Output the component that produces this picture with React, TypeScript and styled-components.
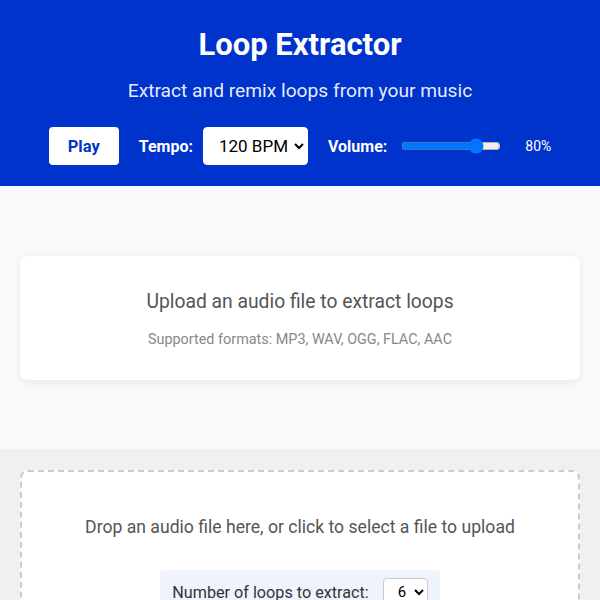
import React, { useState } from 'react';
import styled, { createGlobalStyle } from 'styled-components';

const GlobalStyle = createGlobalStyle`
  * { box-sizing: border-box; }
  body {
    margin: 0;
    font-family: Roboto, "Liberation Sans", Arial, sans-serif;
    background: #f0f0f0;
    color: #333;
  }
`;

const Header = styled.header`
  background-color: #0033cc;
  color: #fff;
  text-align: center;
  padding: 27px 20px 21px;
`;

const Title = styled.h1`
  font-size: 31px;
  line-height: 36px;
  font-weight: 700;
  margin: 0 0 16px;
`;

const Subtitle = styled.p`
  font-size: 19.2px;
  line-height: 23px;
  font-weight: 400;
  margin: 0 0 25px;
  color: rgba(255, 255, 255, 0.92);
`;

const Controls = styled.div`
  display: flex;
  justify-content: center;
  align-items: center;
  gap: 20px;
`;

const Group = styled.div`
  display: flex;
  align-items: center;
  gap: 10px;
`;

const PlayButton = styled.button`
  height: 38px;
  padding: 0 19px;
  border: none;
  border-radius: 4px;
  background: #fff;
  color: #0033cc;
  font-family: inherit;
  font-size: 16.5px;
  font-weight: 700;
  cursor: pointer;
`;

const Label = styled.label`
  font-size: 16px;
  font-weight: 700;
  color: #fff;
`;

const Select = styled.select<{ $small?: boolean }>`
  height: ${(p) => (p.$small ? '28px' : '38px')};
  padding: ${(p) => (p.$small ? '0 4px 0 10px' : '0 2px 0 11px')};
  border: 1px solid ${(p) => (p.$small ? '#ccc' : '#fff')};
  border-radius: 4px;
  background: #fff;
  color: #000;
  font-family: inherit;
  font-size: ${(p) => (p.$small ? '15px' : '17px')};
`;

const Range = styled.input`
  width: 100px;
  margin: 0 4px;
  accent-color: #0075ff;
`;

const Value = styled.span`
  font-size: 14px;
  color: #fff;
  margin-left: 10px;
`;

const Intro = styled.section`
  background: #f8f9fa;
  padding: 70px 20px 69px;
`;

const Card = styled.div`
  background: #fff;
  border-radius: 8px;
  box-shadow: 0 2px 8px rgba(0, 0, 0, 0.07);
  padding: 34px 20px 31px;
  text-align: center;
`;

const CardTitle = styled.h2`
  font-size: 19.3px;
  line-height: 23px;
  font-weight: 400;
  color: #555;
  margin: 0 0 18px;
`;

const CardNote = styled.p`
  font-size: 14.4px;
  line-height: 18px;
  color: #888;
  margin: 0;
`;

const UploadSection = styled.section`
  background: #f0f0f0;
  padding: 21px 20px 40px;
`;

const DropZone = styled.div`
  background: #fff;
  border: 2px dashed #ccc;
  border-radius: 8px;
  padding: 43px 20px 40px;
  text-align: center;
  cursor: pointer;
`;

const DropText = styled.p`
  font-size: 17.6px;
  line-height: 24px;
  color: #555;
  margin: 0 0 31px;
`;

const LoopBox = styled.div`
  display: inline-flex;
  align-items: center;
  gap: 14px;
  background: #eff3fb;
  border-radius: 4px;
  padding: 8px 12px;
`;

const LoopLabel = styled.label`
  font-size: 16.2px;
  color: #333;
`;

export default function App() {
  const [volume, setVolume] = useState(80);
  const [tempo, setTempo] = useState('120');
  const [loops, setLoops] = useState('6');

  return (
    <>
      <GlobalStyle />
      <Header>
        <Title>Loop Extractor</Title>
        <Subtitle>Extract and remix loops from your music</Subtitle>
        <Controls>
          <PlayButton type="button">Play</PlayButton>
          <Group>
            <Label htmlFor="tempo">Tempo:</Label>
            <Select id="tempo" value={tempo} onChange={(e) => setTempo(e.target.value)}>
              <option value="90">90 BPM</option>
              <option value="100">100 BPM</option>
              <option value="120">120 BPM</option>
              <option value="140">140 BPM</option>
            </Select>
          </Group>
          <Group>
            <Label htmlFor="volume">Volume:</Label>
            <Range
              id="volume"
              type="range"
              min={0}
              max={100}
              value={volume}
              onChange={(e) => setVolume(Number(e.target.value))}
            />
            <Value>{volume}%</Value>
          </Group>
        </Controls>
      </Header>

      <Intro>
        <Card>
          <CardTitle>Upload an audio file to extract loops</CardTitle>
          <CardNote>Supported formats: MP3, WAV, OGG, FLAC, AAC</CardNote>
        </Card>
      </Intro>

      <UploadSection>
        <DropZone>
          <DropText>Drop an audio file here, or click to select a file to upload</DropText>
          <LoopBox>
            <LoopLabel htmlFor="loops">Number of loops to extract:</LoopLabel>
            <Select $small id="loops" value={loops} onChange={(e) => setLoops(e.target.value)}>
              {[2, 4, 6, 8].map((n) => (
                <option key={n} value={String(n)}>{n}</option>
              ))}
            </Select>
          </LoopBox>
        </DropZone>
      </UploadSection>
    </>
  );
}
